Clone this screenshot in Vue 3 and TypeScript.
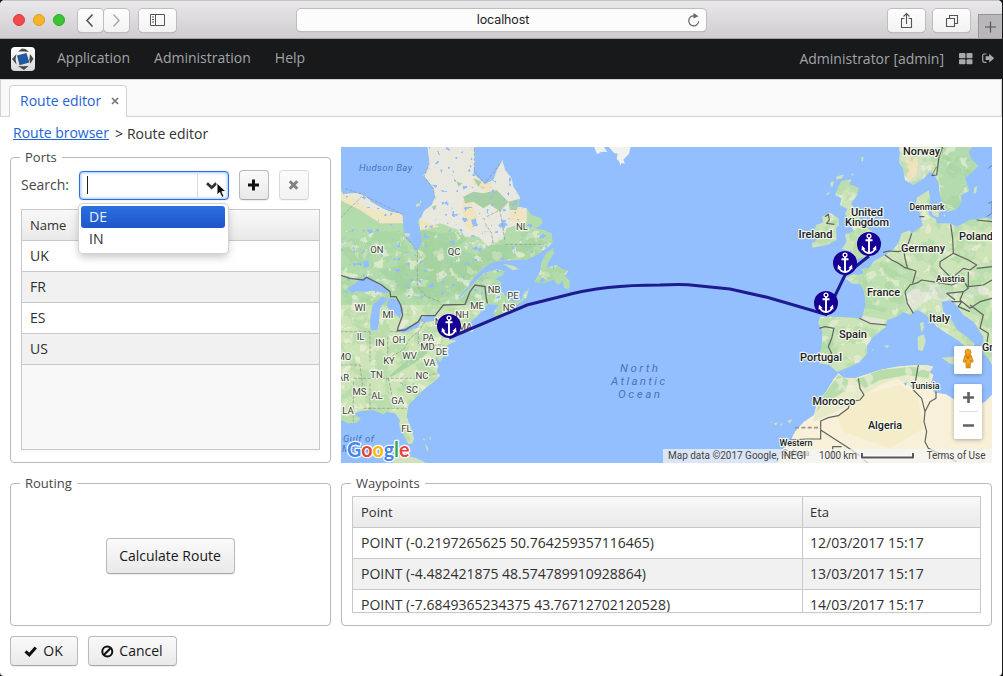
<script setup lang="ts">
interface Label {
  t: string
  x: number
  y: number
  s?: number
  w?: number
}
interface Waypoint {
  point: string
  eta: string
}

const menu: string[] = ['Application', 'Administration', 'Help']
const ports: string[] = ['UK', 'FR', 'ES', 'US']
const options: string[] = ['DE', 'IN']
const waypoints: Waypoint[] = [
  { point: 'POINT (-0.2197265625 50.764259357116465)', eta: '12/03/2017 15:17' },
  { point: 'POINT (-4.482421875 48.574789910928864)', eta: '13/03/2017 15:17' },
  { point: 'POINT (-7.6849365234375 43.76712702120528)', eta: '14/03/2017 15:17' },
]
const markers = [
  { x: 449, y: 326 },
  { x: 869, y: 244 },
  { x: 845, y: 263 },
  { x: 826, y: 303 },
]

const states: Label[] = [
  { t: 'ON', x: 377, y: 252.5 }, { t: 'QC', x: 454, y: 254.5 }, { t: 'NL', x: 522, y: 229.5 },
  { t: 'NB', x: 494, y: 292.5 }, { t: 'PE', x: 513, y: 298.5 }, { t: 'ME', x: 477, y: 308.5 },
  { t: 'NS', x: 509, y: 310.5 }, { t: 'WI', x: 360, y: 310.5 }, { t: 'MI', x: 388, y: 317.5 },
  { t: 'NH', x: 462, y: 317.5 }, { t: 'NY', x: 441, y: 325 }, { t: 'MA', x: 465, y: 330 },
  { t: 'IL', x: 360.5, y: 340 }, { t: 'IN', x: 380, y: 346 }, { t: 'OH', x: 399, y: 343 },
  { t: 'PA', x: 428.5, y: 341 }, { t: 'MD', x: 427.5, y: 350 }, { t: 'DE', x: 441.5, y: 355 },
  { t: 'MO', x: 344, y: 360 }, { t: 'KY', x: 389, y: 364 }, { t: 'WV', x: 409.5, y: 359 },
  { t: 'VA', x: 429.5, y: 366 }, { t: 'AR', x: 343, y: 381 }, { t: 'TN', x: 376.5, y: 378 },
  { t: 'NC', x: 422, y: 379 }, { t: 'MS', x: 359.5, y: 395 }, { t: 'AL', x: 377, y: 399 },
  { t: 'SC', x: 412, y: 393 }, { t: 'GA', x: 397.5, y: 404 }, { t: 'LA', x: 348, y: 414 },
  { t: 'FL', x: 406.5, y: 432 },
]
const countries: Label[] = [
  { t: 'Norway', x: 921.5, y: 155, w: 37 },
  { t: 'Denmark', x: 927, y: 209.5, s: 9.5, w: 35 },
  { t: 'United', x: 867, y: 216, w: 32 },
  { t: 'Kingdom', x: 867, y: 226, w: 44 },
  { t: 'Ireland', x: 815.5, y: 238, w: 34 },
  { t: 'Germany', x: 923, y: 252, w: 44 },
  { t: 'Poland', x: 976, y: 240, w: 34 },
  { t: 'Austria', x: 950.5, y: 282, s: 9.5, w: 29 },
  { t: 'France', x: 883.5, y: 296, w: 33 },
  { t: 'Italy', x: 939.5, y: 322, w: 21 },
  { t: 'Spain', x: 853, y: 338, w: 28 },
  { t: 'Portugal', x: 821, y: 361, w: 42 },
  { t: 'Tunisia', x: 925, y: 388.5, s: 9.5, w: 29 },
  { t: 'Morocco', x: 834, y: 405, w: 43 },
  { t: 'Algeria', x: 885, y: 429, w: 34 },
  { t: 'Western', x: 796, y: 446, s: 9.5, w: 33 },
  { t: 'Sahara', x: 796, y: 455.5, s: 9.5, w: 27 },
  { t: 'Gr', x: 987.5, y: 351, w: 11 },
]

const america =
  'M0,120L8,148 50,143 75,152 95,172 130,192 150,200 187,208 192,268 205,288 220,302 235,315 247,290 240,250 232,228 245,215 252,198 275,180 284,160 280,130 262,105 250,93 262,75 268,50 262,0 402,0 405,50 400,85 415,100 435,118 460,105 470,78 487,45 495,75 515,100 520,125 530,140 540,158 533,185 560,190 575,210 605,220 608,240 585,250 612,255 635,265 638,295 615,313 590,330 560,345 520,345 460,350 430,370 400,400 385,425 355,455 360,458 398,418 430,385 470,372 495,378 490,390 465,402 485,412 480,435 500,455 520,470 545,465 550,445 568,430 558,460 530,480 500,505 470,522 460,505 475,480 445,478 425,500 392,530 380,545 398,560 375,562 350,575 325,582 348,588 322,600 315,625 300,650 285,635 295,665 290,680 300,692 280,712 255,730 235,750 205,780 200,815 213,850 222,880 218,895 206,898 196,880 178,845 180,825 165,805 140,800 130,808 100,795 60,798 40,806 62,822 50,832 25,835 0,822Z'
const newfoundland =
  'M582,412L600,380 605,350 618,325 640,308 642,325 625,352 620,368 650,360 668,372 685,378 675,392 690,408 688,435 672,428 668,408 655,420 640,405 610,415Z'
const scandinavia =
  'M383,0L390,20 387,50 400,72 405,105 430,120 462,100 478,80 492,88 505,110 510,150 520,180 533,200 558,192 575,170 572,150 597,138 585,100 608,78 625,62 605,45 595,20 610,0Z'
const europe =
  'M458,242L450,205 438,185 440,158 476,136 481,165 474,190 478,212 498,222 500,235 540,235 560,245 600,225 650,218 670,225 670,665 655,640 640,625 640,575 610,530 580,510 562,485 545,465 515,470 520,500 545,525 562,555 590,575 614,597 602,620 588,618 580,600 570,590 530,565 500,545 485,525 455,500 440,495 420,510 400,500 380,515 352,525 348,545 310,575 290,602 292,625 270,650 240,665 215,675 200,680 178,660 148,655 145,640 155,605 158,560 145,535 150,515 200,515 275,520 288,480 283,440 272,418 245,415 225,400 250,388 265,390 282,385 275,372 298,368 312,348 345,330 368,315 385,295 395,265 418,256 425,265Z'
const africa =
  'M205,685L192,702 165,745 142,770 132,810 100,832 75,860 60,890 38,915 20,960 670,960 670,745 645,770 610,785 560,768 528,748 492,742 482,718 490,690 478,682 490,665 470,660 440,660 380,665 330,675 285,690 255,700 220,698Z'
const britain =
  'M215,108L245,103 238,118 266,128 262,150 243,175 255,195 275,230 300,255 318,270 325,290 333,300 310,325 280,338 245,342 213,352 235,325 252,320 215,312 230,290 225,268 250,260 240,225 225,208 232,192 210,180 215,160 196,150 205,125Z'
const ireland =
  'M138,240L160,232 156,215 180,203 205,220 207,240 198,250 200,285 170,300 128,308 125,295 140,285 130,270Z'
const islands =
  'M198,95L222,88 216,100 200,104ZM243,87L250,86 248,93ZM273,36L280,37 279,50 275,48ZM182,112L192,108 188,125 181,124ZM170,145L180,140 172,152ZM485,197L510,192 505,218 488,210ZM520,210L527,208 524,216ZM613,128L622,122 618,145 611,146ZM450,535L460,530 462,548 454,563ZM443,575L462,568 467,590 458,618 444,614ZM515,638L550,635 582,630 570,665 538,655ZM343,602L356,600 354,608 345,606ZM305,615L311,613 309,618ZM12,835L24,832 18,842ZM30,840L38,831 36,842ZM52,827L66,823 60,836ZM2,828L6,832 3,835Z'
</script>

<template>
  <div class="window">
    <header class="chrome">
      <span class="light red"></span><span class="light amber"></span><span class="light green"></span>
      <div class="nav">
        <span class="cbtn back"><svg width="26" height="22"><path d="M15.500 5.500 10 11.500l5.500 6" fill="none" stroke="#555" stroke-width="1.600" /></svg></span>
        <span class="cbtn fwd"><svg width="26" height="22"><path d="m10.500 5.500 5.500 6-5.500 6" fill="none" stroke="#aaa" stroke-width="1.500" /></svg></span>
      </div>
      <span class="cbtn side"><svg width="38" height="22"><path d="M11.500 5.500h14v11h-14zM16.500 5.500v11M13 8h2M13 10.500h2M13 13h2" fill="none" stroke="#555" /></svg></span>
      <div class="address"><span>localhost</span>
        <svg class="reload" width="16" height="16" viewBox="0 0 16 16"><path d="M12.700 8.300a5 5 0 1 1-4.200-5.400" fill="none" stroke="#666" stroke-width="1.200" /><path d="m7.500 0 5 3.200-5 2.400z" fill="#666" /></svg>
      </div>
      <span class="cbtn share"><svg width="38" height="24"><path d="M16.500 9.500h-3v9h10v-9h-3M18.500 15V4.500m-3 3 3-3 3 3" fill="none" stroke="#555" stroke-width="1.100" /></svg></span>
      <span class="cbtn tabs"><svg width="38" height="24"><path d="M13.500 9.500h8v8h-8zM16.500 9V6.500h8v8H22" fill="none" stroke="#555" stroke-width="1.100" /></svg></span>
      <span class="plus"><svg width="24" height="23"><path d="M11.500 6.500v11M6 12h11" stroke="#555" stroke-width="1.200" /></svg></span>
    </header>

    <nav class="menubar">
      <svg class="logo" width="24" height="24" viewBox="0 0 24 24">
        <defs><linearGradient id="lg" x2="0" y2="1"><stop stop-color="#fff" /><stop offset="1" stop-color="#d8d8d8" /></linearGradient></defs>
        <rect width="24" height="24" rx="4" fill="url(#lg)" />
        <path d="m6 8.500 9.500-2.500 2.800 9.500-9.800 2.700z" fill="#20599f" />
        <path d="m7 4.500 4-3 3.500.5 3.500 3-4-.5zM19 7l3.500 4.800-3.200 5-1-4zM17.500 19l-4.500 4-6-4 4 .3zM1 12l4.500-5-1 5 1 5.500z" fill="#484848" />
      </svg>
      <span v-for="m in menu" :key="m" class="item">{{ m }}</span>
      <span class="user">Administrator [admin]</span>
      <svg class="grid-icon" width="14" height="12"><path d="M1 0h4.500q1 0 1 1v3.500q0 .8-1 .8H1q-1 0-1-.8V1q0-1 1-1zM8.500 0h4q1 0 1 1v3.500q0 .8-1 .8h-4q-1 0-1-.8V1q0-1 1-1zM1 6.300h4.500q1 0 1 1v3q0 1-1 1H1q-1 0-1-1v-3q0-1 1-1zM8.500 6.300h4q1 0 1 1v3q0 1-1 1h-4q-1 0-1-1v-3q0-1 1-1z" fill="#a9a9a9" /></svg>
      <svg class="exit-icon" width="13" height="11"><path d="M4.500 1H2.300Q.7 1 .7 2.600v5Q.7 9.300 2.300 9.300h2.200" fill="none" stroke="#a9a9a9" stroke-width="1.200" /><path d="M3.600 3.300h3.600V.8l5 4.400-5 4.400V7H3.600z" fill="#a9a9a9" /></svg>
    </nav>

    <div class="tabbar"><div class="tab">Route editor<svg width="8" height="8"><path d="m1 1 6 6M7 1 1 7" stroke="#777" stroke-width="1.700" /></svg></div></div>
    <div class="crumbs"><a>Route browser</a><span>&gt;</span>Route editor</div>

    <main class="content">
      <fieldset class="ports">
        <legend>Ports</legend>
        <div class="search">
          <label>Search:</label>
          <div class="combo">
            <i class="caret"></i>
            <span class="drop"><svg width="30" height="27"><path d="m9 11.300 4.700 4.200 4.700-4.200" fill="none" stroke="#333" stroke-width="2.800" /></svg></span>
            <ul class="popup"><li v-for="(o, i) in options" :key="o" :class="{ sel: i === 0 }">{{ o }}</li></ul>
            <svg class="pointer" width="12" height="17" viewBox="0 0 12 17"><path d="M1 1v12l2.700-2.600 2.200 5 2.200-1-2.200-4.800H10z" fill="#111" stroke="#fff" stroke-width=".9" /></svg>
          </div>
          <span class="btn sq"><svg width="12" height="12"><path d="M5.500.5v11M0 6h11" stroke="#111" stroke-width="3" /></svg></span>
          <span class="btn sq off"><svg width="12" height="12"><path d="m1.800 2.300 7.500 7.500m0-7.500-7.500 7.500" stroke="#111" stroke-width="3" /></svg></span>
        </div>
        <div class="table names">
          <div class="tr th"><div>Name</div></div>
          <div v-for="p in ports" :key="p" class="tr"><div>{{ p }}</div></div>
        </div>
      </fieldset>

      <svg class="map" width="651" height="316" viewBox="341 147 651 316">
        <defs>
          <clipPath id="west"><path :d="america" /><path :d="newfoundland" /></clipPath>
          <clipPath id="euro"><path :d="scandinavia" /><path :d="europe" /><path :d="britain" /><path :d="ireland" /></clipPath>
          <clipPath id="afr"><path :d="africa" /></clipPath>
          <filter id="forest" x="0" y="0" width="1" height="1" color-interpolation-filters="sRGB">
            <feTurbulence type="fractalNoise" baseFrequency="0.02" numOctaves="4" seed="8" />
            <feColorMatrix values="0 0 0 0 .62  0 0 0 0 .82  0 0 0 0 .61  14 0 0 0 -7" />
          </filter>
          <filter id="pale" x="0" y="0" width="1" height="1" color-interpolation-filters="sRGB">
            <feTurbulence type="fractalNoise" baseFrequency="0.035" numOctaves="4" seed="21" />
            <feColorMatrix values="0 0 0 0 .94  0 0 0 0 .94  0 0 0 0 .87  0 16 0 0 -9.600" />
          </filter>
          <filter id="lakes" x="0" y="0" width="1" height="1" color-interpolation-filters="sRGB">
            <feTurbulence type="fractalNoise" baseFrequency="0.06" numOctaves="2" seed="4" />
            <feColorMatrix values="0 0 0 0 .57  0 0 0 0 .74  0 0 0 0 1  0 0 22 0 -15.200" />
          </filter>
        </defs>
        <rect x="341" y="147" width="651" height="316" fill="#93bfff" />

        <g transform="translate(340 145) scale(.33333)">
          <g clip-path="url(#west)">
            <rect y="0" width="700" height="960" fill="#b3dbab" />
            <rect y="480" width="420" height="480" fill="#cde4b6" />
            <path d="M225,0H560V230L500,250 490,280 450,310 415,275 370,275 355,255 300,235 240,255Z" fill="#e9e8df" />
            <path d="M0,140L60,140 190,205 190,235 120,235 60,195 0,165Z" fill="#efe6c3" />
            <path d="M20,148L70,145 180,208 90,190Z" fill="#e8e8df" />
            <path d="M365,165L395,175 412,215 400,260 375,245Z M395,110L420,95 455,115 455,138 425,135Z M508,205L540,185 562,215 540,238 505,225Z M240,225L270,235 300,245 240,255Z" fill="#efe4bd" />
            <path d="M370,155L400,140 430,145 470,135 505,170 480,200 450,178 430,190 400,170 375,175ZM400,100L425,110 415,125ZM505,170L545,160 530,195 510,195ZM275,185L290,180 285,195ZM350,110L368,115 355,125Z" fill="#a7cfa3" />
            <path d="M245,255L300,265 365,260 380,285 340,310 410,330 450,300 500,300 590,300 520,340 430,365 380,410 340,430 250,370 235,310Z" fill="#a9d4a4" />
            <path d="M115,375L230,350 350,400 380,425 330,455 270,460 190,440Z M290,600L230,650 130,710 150,690 220,630 270,600Z" fill="#a9d4a4" />
            <rect y="260" width="700" height="700" filter="url(#pale)" opacity=".65" />
            <rect y="260" width="700" height="700" filter="url(#forest)" opacity=".4" />
            <rect y="0" width="700" height="460" filter="url(#lakes)" />
          </g>
          <path d="M22,432L58,405 80,395 132,422 145,446 120,442 98,436 75,442 50,438 35,444ZM70,350L85,345 88,365 72,370ZM148,458L175,466 190,492 180,520 166,505 154,520 148,500 140,480ZM92,556L90,525 98,480 128,455 142,460 120,490 117,535 112,556ZM168,558L200,546 242,528 235,547 190,564ZM233,525L265,511 292,514 282,527 250,532ZM393,225L408,220 410,245 398,240ZM475,240L490,228 505,240 480,248ZM410,310L425,310 422,325ZM265,245L278,240 278,250ZM312,175L325,172 325,182ZM340,208L355,206 350,214ZM300,75L307,72 305,85Z" fill="#93bfff" />
          <path d="M190,265L210,265 208,275 195,274ZM228,178L238,175 240,182 228,186ZM240,165L245,170 240,178ZM490,357L520,362 536,373 520,376ZM505,440L530,450 525,460 508,455ZM155,940L190,930 230,940 262,955 160,960ZM255,895L265,910 262,922ZM270,872L273,885 268,882ZM248,880L256,882 252,888Z" fill="#cfe2bc" />
          <path d="M660,0H690L700,15 682,14 670,22 667,16ZM740,0H770L765,20 748,38 753,50 742,48 740,57 735,43 728,36 732,15ZM705,0H740V22L720,18Z" transform="translate(102 6)" fill="#f1f1ed" />
          <g fill="none" stroke="#8c9690" stroke-width="2" stroke-dasharray="10 4">
            <path d="M0,220L65,155M15,130L65,148 160,195 188,208M232,315V425L260,455 300,470M285,160L280,130 252,95 268,55M403,10V80L435,115 485,50M495,298H610M435,235L455,265 460,300M232,315 190,268M440,215L480,195 495,290" />
            <path d="M0,560H90M90,560V650M143,575V635M40,700H230L290,685M40,710V830M90,715V795M145,700L165,790M70,790H200M225,740L175,710M143,640L190,615 210,580 235,560M235,560V600H310M0,660H60L70,740M150,560H180M255,530 235,560" />
          </g>
          <path d="M0,390L30,400 70,405 80,397 125,420 150,440 152,455 168,455 182,480 188,510 175,545 172,557 195,555 235,530 245,512 285,512 310,480 375,478 390,440 405,420 435,425 438,455 442,475" fill="none" stroke="#616568" stroke-width="4" />
        </g>

        <g transform="translate(770 145) scale(.33333)">
          <path :d="islands" fill="#cfe3bb" />
          <g clip-path="url(#euro)">
            <rect width="670" height="690" fill="#cce4b7" />
            <path d="M495,0H640V210H520L510,130Z" fill="#b4dbae" />
            <path d="M390,0H500L470,60 440,110H400Z" fill="#d2e3c5" />
            <path d="M405,40L445,35 440,90 415,110Z" fill="#efe3bd" />
            <path d="M280,365L330,350 430,410 420,495 350,525 275,510ZM150,520L200,515 190,600 150,640Z" fill="#bfe0b0" />
            <path d="M400,455L440,425 500,420 550,440 530,470 480,460 440,490 420,500ZM580,430L640,420 660,440 600,460ZM275,512L350,525 340,540 280,530Z" fill="#e7e7e0" opacity=".75" />
            <rect width="670" height="690" filter="url(#pale)" opacity=".6" />
            <rect width="670" height="690" filter="url(#forest)" opacity=".4" />
          </g>
          <g clip-path="url(#afr)">
            <rect y="640" width="670" height="320" fill="#f8f0d9" />
            <path d="M205,680L490,650 480,735 440,735 380,700 330,720 280,750 240,780 130,830 140,770Z" fill="#e6eac8" />
            <path d="M205,690L235,705 230,735 190,760 160,775 140,800 150,765ZM255,705L330,675 430,665 480,680 475,700 410,690 330,705 285,730Z" fill="#b9dcab" />
            <path d="M280,750L390,720 440,750 460,850 360,910 220,860 200,810Z" fill="#f5ecc9" />
            <rect y="640" width="500" height="110" filter="url(#pale)" opacity=".6" />
            <path d="M400,715l12,-4 -4,12zM420,722l10,-3 -4,10z" fill="#93bfff" />
          </g>
          <path d="M485,92L500,65M655,70L668,60M655,175L666,170V205L650,215" fill="none" stroke="#616568" stroke-width="2" />
          <g fill="none" stroke="#61655f" stroke-width="3.600" stroke-linejoin="round">
            <path d="M520,0L507,35 500,90 485,92M165,215L175,208 178,225 170,235 193,238M448,215H463M425,265L415,295 400,305 405,340 412,368M340,322L355,318 385,320 405,315M345,330L365,345 385,355 405,368 438,378 428,415M405,440L420,420 445,412 455,405 500,412 545,420 580,405 595,430 580,440 530,445 555,465M510,350L550,325 595,345 620,360 600,375 580,370 545,400 510,365ZM550,325L548,280 542,238M620,370L666,365M595,380V425L640,420 666,405M580,440L570,465 600,490 630,470 666,460M405,440L412,475 430,505M268,520L300,535 350,540M148,550L165,545 192,550 185,580 175,605 185,625 170,640M600,480L640,510 630,550 655,565 650,600 666,615M545,470H575L565,485 600,500M620,225L666,230" />
            <path d="M265,700L270,730 282,750 270,765 240,770 235,790 205,812 175,818 152,828V882H110L60,885M152,855L260,925 300,960M188,940V905H215M445,660L438,700 430,735 455,760 465,800 462,830 470,860 465,890 475,910 520,930 560,950M465,800L480,770 498,760V740" />
          </g>
          <path d="M75,848H152" stroke="#99978b" stroke-width="5" stroke-dasharray="12 7" />
        </g>

        <g class="lbl states"><text v-for="l in states" :key="l.t + l.x" :x="l.x" :y="l.y">{{ l.t }}</text></g>
        <g class="lbl countries"><text v-for="l in countries" :key="l.t" :x="l.x" :y="l.y" :font-size="l.s ?? 11" :textLength="l.w" lengthAdjust="spacingAndGlyphs">{{ l.t }}</text></g>
        <g class="sea">
          <text x="359" y="170.500" textLength="53">Hudson Bay</text>
          <text x="343" y="441.500" textLength="31">Gulf of</text>
          <text x="342" y="452">Mexico</text>
          <g class="ocean"><text x="620" y="372" textLength="38">North</text><text x="611" y="385" textLength="54">Atlantic</text><text x="618" y="398" textLength="42">Ocean</text></g>
        </g>
        <path d="M449 338 527 305 560 296.700Q585 290 608 287.500T660 285Q675 284.300 688 284.700L730 289 768 297.500 826 314.500 845 275 869 256" fill="none" stroke="#150d88" stroke-opacity=".93" stroke-width="3" />
        <g v-for="m in markers" :key="m.x" :transform="`translate(${m.x} ${m.y})`">
          <circle r="12" fill="#160093" />
          <circle cy="-8" r="1.900" fill="none" stroke="#fff" stroke-width="1.400" />
          <path d="M0-6V8.500M-3.500-3.700h7M-6 5Q-4.500 8.600 0 9 4.500 8.600 6 5" fill="none" stroke="#fff" stroke-width="1.900" />
          <path d="m-7.500 6.500.5-5 3.500 3.600zM7.500 6.500 7 1.500 3.500 5.100z" fill="#fff" />
        </g>

        <rect x="663" y="449" width="329" height="14" fill="#f5f5f5" fill-opacity=".72" />
        <g class="legal">
          <text x="668" y="459" textLength="138">Map data ©2017 Google, INEGI</text>
          <text x="819" y="459" textLength="38">1000 km</text>
          <text x="926.500" y="459" textLength="59">Terms of Use</text>
        </g>
        <path d="M862 453v4.500h51V453" fill="none" stroke="#fff" stroke-width="4" /><path d="M862 453v4.500h51V453" fill="none" stroke="#555" stroke-width="2" />
        <text class="google" x="347" y="456.500" textLength="62.500" lengthAdjust="spacingAndGlyphs"><tspan fill="#4285f4">G</tspan><tspan fill="#ea4335">o</tspan><tspan fill="#fbbc05">o</tspan><tspan fill="#4285f4">g</tspan><tspan fill="#34a853">l</tspan><tspan fill="#ea4335">e</tspan></text>
        <g class="control">
          <rect x="954" y="346" width="28" height="28" rx="1.500" fill="#fff" /><rect x="954" y="384" width="28" height="55" rx="1.500" fill="#fff" />
        </g>
        <path d="M959 411.500h19" stroke="#ddd" /><path d="M963 397.500h11M968.500 392v11M963 425.500h11" stroke="#616161" stroke-width="2.600" />
        <g fill="#f6a51b" stroke="#b97805" stroke-width=".7"><path d="M965 355q3-1.500 6 0l2.300 6.500-1.600 1-1-2.500-.5 8h-1.500l-.5-4-.5 4h-1.500l-.5-8-1 2.500-1.600-1z" /><circle cx="968" cy="352.300" r="3" /></g>
        <path d="m966 356 2 2.500 2-2.500" fill="none" stroke="#dc5b16" stroke-width="1.200" />
      </svg>

      <fieldset class="routing"><legend>Routing</legend><div class="center"><span class="btn calc">Calculate Route</span></div></fieldset>
      <fieldset class="waypoints">
        <legend>Waypoints</legend>
        <div class="table">
          <div class="tr th"><div>Point</div><div>Eta</div></div>
          <div v-for="w in waypoints" :key="w.point" class="tr"><div>{{ w.point }}</div><div>{{ w.eta }}</div></div>
        </div>
      </fieldset>
    </main>

    <footer class="actions">
      <span class="btn ok"><svg width="14" height="12"><path d="m1.500 6.300 3.800 3.500 6.500-7.300" fill="none" stroke="#111" stroke-width="3" /></svg>OK</span>
      <span class="btn cancel"><svg width="13" height="13"><g fill="none" stroke="#111" stroke-width="2"><circle cx="6.300" cy="6.500" r="5" /><path d="m2.800 10 7-7" /></g></svg>Cancel</span>
    </footer>
  </div>
</template>

<style>
body { margin: 0; background: #17191b; overflow: hidden; }
</style>
<style scoped>
* { box-sizing: border-box; }
.window { width: 1002px; height: 676px; background: #fff; border-radius: 5px 5px 4px 4px; overflow: hidden; font: 14px/20px "Open Sans", sans-serif; color: #303030; display: flex; flex-direction: column; }
svg { display: block; flex: none; }
.chrome { height: 39px; flex: none; display: flex; align-items: flex-start; padding: 8px 0 0 13px; background: linear-gradient(#e9e7e9, #cfcdcf); border-top: 1px solid #c4c2c4; border-bottom: 1px solid #a5a3a5; }
.light { width: 12px; height: 12px; border-radius: 50%; margin: 5px 8px 0 0; border: 1px solid; }
.red { background: #f24a4b; border-color: #dc3a3c; }
.amber { background: #f6b32a; border-color: #dd9a1d; }
.green { background: #3dc433; border-color: #2cab24; margin-right: 13px; }
.cbtn { height: 23px; border-radius: 4px; background: linear-gradient(#fefefe, #f3f2f3); box-shadow: 0 0 0 1px #bfbdbf, 0 1px 1px #999; }
.back svg, .fwd svg { margin-left: -1px; }
.nav { display: flex; gap: 1px; }
.nav .cbtn { width: 25px; }
.side { width: 37px; margin-left: 10px; }
.address { width: 409px; height: 22px; margin-left: 121px; background: #fcfcfc; border-radius: 4px; box-shadow: 0 0 0 1px #bfbdbf, 0 1px 1px #999; text-align: center; font: 12.5px/22px Inter, sans-serif; letter-spacing: -.1px; color: #222; position: relative; }
.address span { margin-left: 3px; }
.reload { position: absolute; right: 4px; top: 4px; }
.share { width: 37px; margin-left: 182px; }
.tabs { width: 37px; margin-left: 8px; }
.plus { width: 24px; height: 24px; margin: 5px 0 0 8px; background: #b9b7b9; border: 1px solid #969496; border-right: 0; border-bottom: 0; }
.menubar { height: 40px; flex: none; background: #17191b; color: #a2a4a6; display: flex; align-items: center; padding: 0 7px 1px 11px; }
.logo { margin-right: 22px; }
.item { margin-right: 24px; margin-top: -1px; }
.user { margin-left: auto; margin-right: 15px; }
.grid-icon { margin-right: 9px; }
.tabbar { height: 38px; flex: none; background: #f9f9f9; border: 1px solid #d3d3d3; padding: 5px 0 0 8px; display: flex; }
.tab { width: 118px; height: 32px; border: 1px solid #d3d3d3; border-bottom: 0; border-radius: 4px 4px 0 0; background: #fff; color: #2463d6; padding: 5px 7px 0 10px; display: flex; justify-content: space-between; }
.tab svg { margin-top: 6px; }
.crumbs { height: 30px; flex: none; padding: 6px 0 0 13px; display: flex; line-height: 21px; }
.crumbs a { color: #2463d6; text-decoration: underline; margin-top: -1px; }
.crumbs span { margin: 0 4px 0 6px; }
.content { flex: none; height: 479px; padding: 0 10px; display: grid; grid-template-columns: 321px 651px; grid-template-rows: 316px 153px; column-gap: 10px; row-gap: 10px; }
fieldset { min-width: 0; margin: 0; border: 1px solid #b9b9b9; border-radius: 4px; padding: 0 10px; }
legend { height: 20px; padding: 0 5px; margin-left: -1px; font-size: 13px; color: #474747; }
.search { display: flex; align-items: center; height: 30px; margin-top: 3px; }
.search label { width: 58px; color: #474747; white-space: nowrap; }
.combo { width: 150px; height: 29px; border: 1px solid #2a6fdc; border-radius: 4px; box-shadow: inset 0 0 3px 1px #a4c6f7, 0 0 1px #5b93e8; position: relative; display: flex; align-items: center; margin-right: 10px; }
.caret { width: 1px; height: 18px; margin-left: 7px; background: #222; }
.drop { height: 27px; width: 31px; margin-left: auto; border-left: 1px solid #dbdbdb; }
.popup { position: absolute; z-index: 4; top: 32px; left: -1px; width: 149px; height: 49px; margin: 0; padding: 2px; list-style: none; background: #fff; border-radius: 4px; box-shadow: 0 0 0 1px #d4d4d4, 0 4px 9px rgba(0,0,0,.23); }
.popup li { height: 22px; line-height: 22px; padding: 0 8px; border-radius: 3px; margin-right: 1px; }
.popup .sel { background: linear-gradient(#2b70df, #2055ca); color: #e8f0fc; }
.pointer { position: absolute; left: 136px; top: 10px; z-index: 5; }
.btn { display: inline-flex; align-items: center; justify-content: center; height: 30px; border: 1px solid #bababa; border-bottom-color: #a8a8a8; border-radius: 4px; background: linear-gradient(#fafafa, #e9e9e9); box-shadow: 0 1px 1px rgba(0,0,0,.08); color: #191919; }
.sq { width: 30px; margin-right: 10px; }
.off { opacity: .52; }
.table { border: 1px solid #c8c8c8; background: #f8f8f8; overflow: hidden; box-shadow: 0 2px 0 #fafafa; }
.names { height: 241px; margin-top: 9px; width: 299px; }
.tr { display: flex; height: 31px; line-height: 30px; background: #fff; border-bottom: 1px solid #c8c8c8; }
.tr > div { flex: none; padding: 0 8px; }
.tr.th { background: linear-gradient(#f9f9f9, #e9e9e9); font-size: 13px; }
.tr:nth-child(odd):not(.th) { background: #f1f1f1; }
.waypoints .tr > div:first-child { width: 449px; }
.waypoints .tr > div + div { border-left: 1px solid #c8c8c8; flex: 1; padding-left: 7px; }
.waypoints .table { height: 117px; margin-top: 3px; width: 629px; }
.center { display: flex; justify-content: center; }
.calc { width: 129px; height: 36px; margin-top: 45px; padding-right: 1px; }
.ports, .map { align-self: start; }
.ports { height: 316px; }
.actions { display: flex; gap: 10px; padding: 10px; }
.ok { width: 68px; gap: 5px; padding-right: 1px; }
.cancel { width: 89px; gap: 5px; padding-right: 1px; }
.lbl text { font-family: Roboto, sans-serif; text-anchor: middle; paint-order: stroke; stroke: #f8fbf2; stroke-width: 2.400px; stroke-opacity: .85; stroke-linejoin: round; fill: #222; }
.states text { font-size: 9.500px; fill: #3d413c; }
.countries text { font-weight: 500; }
.sea text { font: italic 9.500px Roboto, sans-serif; fill: #4775bd; }
.sea .ocean text { font-size: 11.500px; }
.legal text { font: 10px Roboto, sans-serif; fill: #444; }
.google { font: 700 21px Lato, sans-serif; paint-order: stroke; stroke: #fff; stroke-width: 2.500px; stroke-linejoin: round; }
.control { filter: drop-shadow(0 1px 2px rgba(0,0,0,.3)); }
</style>
